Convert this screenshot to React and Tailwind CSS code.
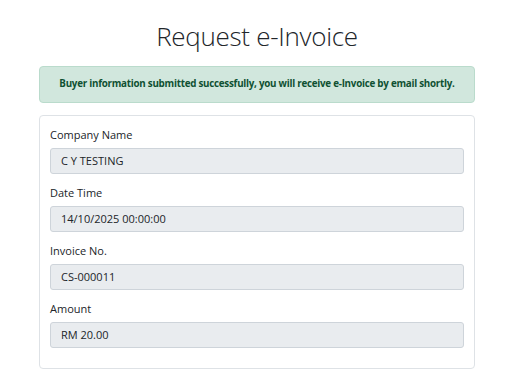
export default function App() {
  const fields = [
    ["Company Name", "C Y TESTING"],
    ["Date Time", "14/10/2025 00:00:00"],
    ["Invoice No.", "CS-000011"],
    ["Amount", "RM 20.00"],
  ];
  return (
    <div className="w-[511px] h-[378px] bg-white overflow-hidden" style={{ fontFamily: '"Open Sans", "Noto Sans", sans-serif' }}>
      <div className="ml-[39px] w-[436px]">
        <h1 className="text-center text-[26px] leading-[32px] font-light text-[#212529] pt-[20px] tracking-[-0.3px]">Request e-Invoice</h1>
        <div className="mt-[14px] h-[37px] rounded-[4px] border border-[#badbcc] bg-[#d1e7dd] flex items-center justify-center text-[9.8px] font-bold text-[#0f5132] tracking-[-0.25px]">
          Buyer information submitted successfully, you will receive e-Invoice by email shortly.
        </div>
        <div className="mt-[12px] h-[254px] rounded-[4px] border border-[#dee2e6] px-[10px] pt-[11px]">
          {fields.map(([label, value]) => (
            <div key={label} className="mb-[11px]">
              <div className="text-[11px] leading-[16px] text-[#212529] mb-[5px]">{label}</div>
              <div className="h-[26px] rounded-[3px] border border-[#ced4da] bg-[#e9ecef] px-[10px] flex items-center text-[11px] text-[#212529]">{value}</div>
            </div>
          ))}
        </div>
      </div>
    </div>
  );
}
